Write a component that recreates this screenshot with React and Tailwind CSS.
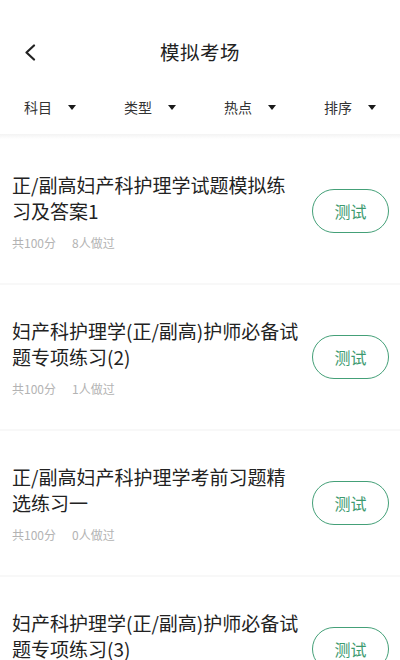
import React from 'react';

const items = [
  { title: '正/副高妇产科护理学试题模拟练习及答案1', score: '共100分', done: '8人做过' },
  { title: '妇产科护理学(正/副高)护师必备试题专项练习(2)', score: '共100分', done: '1人做过' },
  { title: '正/副高妇产科护理学考前习题精选练习一', score: '共100分', done: '0人做过' },
  { title: '妇产科护理学(正/副高)护师必备试题专项练习(3)', score: '共100分', done: '2人做过' },
];

const filters = ['科目', '类型', '热点', '排序'];

function Caret() {
  return (
    <svg width="8" height="5" viewBox="0 0 8 5" className="ml-4">
      <path d="M0 0 L8 0 L4 5 Z" fill="#1a1a1a" />
    </svg>
  );
}

export default function App() {
  return (
    <div
      className="w-[400px] h-[660px] overflow-hidden bg-white text-[#222]"
      style={{ fontFamily: '"Noto Sans CJK SC", "Noto Sans", sans-serif' }}
    >
      {/* title bar */}
      <div className="relative h-[80px] flex items-center justify-center pt-[24px]">
        <svg
          width="12"
          height="17"
          viewBox="0 0 12 17"
          className="absolute left-[24px] top-[44px]"
        >
          <path d="M10 1.5 L2.5 8.5 L10 15.5" fill="none" stroke="#222" strokeWidth="2.2" strokeLinecap="round" strokeLinejoin="round" />
        </svg>
        <span className="text-[19.5px] leading-[28px] tracking-[0.5px]">模拟考场</span>
      </div>

      {/* filter row */}
      <div className="h-[54px] grid grid-cols-4">
        {filters.map((f) => (
          <div key={f} className="flex items-center pl-6">
            <span className="text-[14px] leading-5 text-[#333]">{f}</span>
            <Caret />
          </div>
        ))}
      </div>
      <div className="h-[5px] bg-gradient-to-b from-[#f3f3f3] to-white" />

      {/* list */}
      <div>
        {items.map((it, i) => (
          <div
            key={i}
            className="h-[146px] flex items-center border-b-2 border-[#f8f8f8] pl-3 pr-[11px]"
          >
            <div className="w-[288px] pt-[1px]">
              <div className="text-[19px] leading-[26px] text-[#222]">{it.title}</div>
              <div className="mt-[10px] flex gap-[16px] text-[12px] leading-[18px] text-[#b3b3b3]">
                <span>{it.score}</span>
                <span>{it.done}</span>
              </div>
            </div>
            <div className="ml-auto w-[77px] h-[44px] rounded-full border-[1.5px] border-[#44a078] flex items-center justify-center text-[16px] text-[#3d9a6f]">
              测试
            </div>
          </div>
        ))}
      </div>
    </div>
  );
}
